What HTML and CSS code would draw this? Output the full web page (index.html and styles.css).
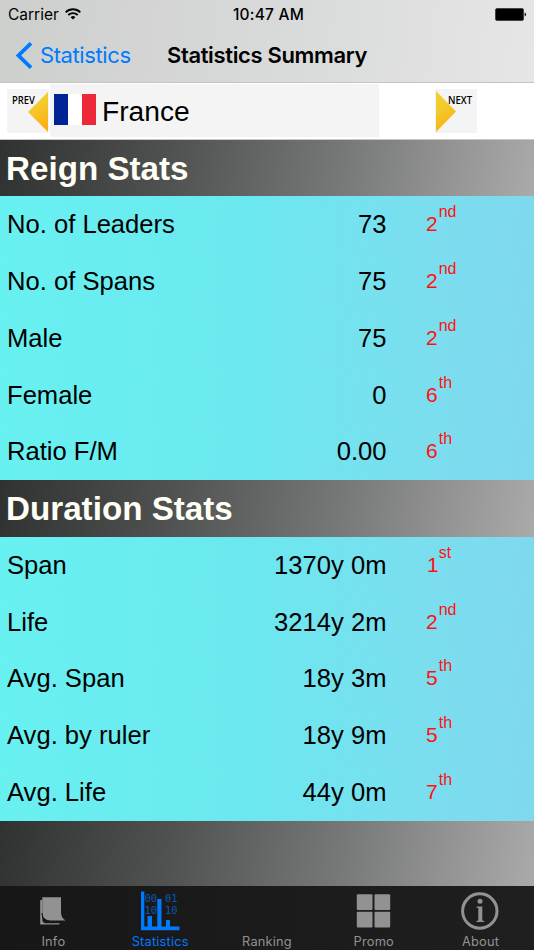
FILE: index.html
```html
<!DOCTYPE html>
<html>
<head>
<meta charset="utf-8">
<meta name="viewport" content="width=device-width, initial-scale=1.0">
<title>Statistics Summary</title>
<link rel="stylesheet" href="styles.css">
</head>
<body>

<div class="topbar">
  <div class="status">
    <div class="carrier">
      <span>Carrier</span>
      <svg width="16" height="12" viewBox="0 0 16 12" fill="none" stroke="#000" stroke-width="1.8">
        <path d="M0.7 4.3a10.3 10.3 0 0 1 14.6 0"/>
        <path d="M3.3 7a6.6 6.6 0 0 1 9.4 0"/>
        <path d="M8 11.6L5.6 9.2a3.4 3.4 0 0 1 4.8 0z" fill="#000" stroke="none"/>
      </svg>
    </div>
    <div class="time">10:47 AM</div>
    <div class="battery">
      <svg width="32" height="13" viewBox="0 0 32 13">
        <rect x="0.5" y="0.5" width="28" height="12" rx="1.5" fill="#000" stroke="#444"/>
        <path d="M29.7 4.5c1.8 0.6 1.8 3.4 0 4z"/>
      </svg>
    </div>
  </div>
  <div class="nav">
    <a class="back" href="#">
      <svg width="17" height="27" viewBox="0 0 17 27" fill="none" stroke="#007aff" stroke-width="3.8"><path d="M16 1.3L3.5 13.5 16 25.7"/></svg>
      <span>Statistics</span>
    </a>
    <div class="title">Statistics Summary</div>
  </div>
</div>

<div class="picker">
  <a class="step prev" href="#">
    <svg width="42" height="44" viewBox="0 0 42 44">
      <defs><linearGradient id="gold" x1="0" y1="0" x2="0.3" y2="1"><stop offset="0" stop-color="#f0cf38"/><stop offset="0.45" stop-color="#f3cb2b"/><stop offset="1" stop-color="#fbb116"/></linearGradient></defs>
      <path d="M41 3v40L21 23z" fill="url(#gold)"/>
      <text x="5" y="15" textLength="23" lengthAdjust="spacingAndGlyphs">PREV</text>
    </svg>
  </a>
  <div class="country">
    <div class="flag"><i></i><i></i><i></i></div>
    <span>France</span>
  </div>
  <a class="step next" href="#">
    <svg width="42" height="44" viewBox="0 0 42 44">
      <path d="M1 2v41l20-20.5z" fill="url(#gold)"/>
      <text x="13" y="15" textLength="24" lengthAdjust="spacingAndGlyphs">NEXT</text>
    </svg>
  </a>
</div>

<div class="stats">
  <h2>Reign Stats</h2>
  <div class="row"><span>No. of Leaders</span><b>73</b><em>2<sup>nd</sup></em></div>
  <div class="row"><span>No. of Spans</span><b>75</b><em>2<sup>nd</sup></em></div>
  <div class="row"><span>Male</span><b>75</b><em>2<sup>nd</sup></em></div>
  <div class="row"><span>Female</span><b>0</b><em>6<sup>th</sup></em></div>
  <div class="row"><span>Ratio F/M</span><b>0.00</b><em>6<sup>th</sup></em></div>
  <h2>Duration Stats</h2>
  <div class="row"><span>Span</span><b>1370y 0m</b><em class="first">1<sup>st</sup></em></div>
  <div class="row"><span>Life</span><b>3214y 2m</b><em>2<sup>nd</sup></em></div>
  <div class="row"><span>Avg. Span</span><b>18y 3m</b><em>5<sup>th</sup></em></div>
  <div class="row"><span>Avg. by ruler</span><b>18y 9m</b><em>5<sup>th</sup></em></div>
  <div class="row"><span>Avg. Life</span><b>44y 0m</b><em>7<sup>th</sup></em></div>
</div>
<div class="filler"></div>

<div class="tabs">
  <a href="#">
    <svg width="40" height="40" viewBox="0 0 40 40" fill="#929292">
      <path d="M9.3 9H7.2v24.5h18.3l2-1.2H12q-2.700-0.500-2.700-3z"/>
      <path d="M9.300 6.200H28V21q0 6 4.500 8.500H17q-7.700-0.500-7.700-8z"/>
      <path d="M8.900 22q0.500 8.600 8 8.600h13" fill="none" stroke="#171717" stroke-width="1.1"/>
    </svg>
    <span>Info</span>
  </a>
  <a class="active" href="#">
    <svg width="40" height="40" viewBox="0 0 40 40" fill="#007aff">
      <g class="digits"><text x="4.5" y="10.5" textLength="12.5" lengthAdjust="spacingAndGlyphs">00</text><text x="25" y="10.5" textLength="12.5" lengthAdjust="spacingAndGlyphs">01</text><text x="4.5" y="22.500" textLength="12.5" lengthAdjust="spacingAndGlyphs">10</text><text x="25" y="22.500" textLength="12.5" lengthAdjust="spacingAndGlyphs">10</text></g>
      <path d="M1 0.500h3.300V35.500H39.500v3.700H1z"/>
      <path d="M7.500 25h4.500v11H7.500zM17.300 8h4.200v28h-4.200zM26 29h4v7h-4z"/>
    </svg>
    <span>Statistics</span>
  </a>
  <a href="#">
    <svg width="40" height="40"></svg>
    <span>Ranking</span>
  </a>
  <a href="#">
    <svg width="40" height="40" viewBox="0 0 40 40" fill="#929292">
      <rect x="2.8" y="3.3" width="15.7" height="15.7" rx="1"/>
      <rect x="20.5" y="3.3" width="15.7" height="15.7" rx="1"/>
      <rect x="2.8" y="20.8" width="15.7" height="15.7" rx="1"/>
      <rect x="20.5" y="20.8" width="15.7" height="15.7" rx="1"/>
    </svg>
    <span>Promo</span>
  </a>
  <a href="#">
    <svg width="40" height="40" viewBox="0 0 40 40" fill="#929292">
      <circle cx="18.8" cy="20" r="17.2" fill="none" stroke="#929292" stroke-width="3"/>
      <circle cx="19" cy="10.3" r="2.5"/>
      <path d="M15.5 15.5h5.800v14l1.800 0.500v1h-7.600v-1l1.800-0.500V17l-1.800-0.500z"/>
    </svg>
    <span>About</span>
  </a>
</div>

</body>
</html>
```

FILE: styles.css
```css
body {
  margin: 0;
  height: 950px;
  display: flex;
  flex-direction: column;
  overflow: hidden;
  font-family: "Liberation Sans", Arial, sans-serif;
  color: #000;
}

a {
  text-decoration: none;
}

svg {
  display: block;
}

/* status bar + navigation */
.topbar {
  box-sizing: border-box;
  height: 83px;
  font-family: Inter, sans-serif;
  background: linear-gradient(97deg, #cdcfcd, #d9dada 55%, #e6e6e6);
  border-bottom: 1px solid #c3c3c3;
}

.status {
  display: grid;
  grid-template-columns: 1fr auto 1fr;
  align-items: center;
  height: 28px;
  padding: 0 7px 0 8px;
  font-size: 15.5px;
}

.carrier {
  display: flex;
  align-items: center;
  gap: 6px;
}

.time {
  font-weight: 500;
  letter-spacing: 0.2px;
  margin-left: 2px;
}

.battery {
  justify-self: end;
}

.nav {
  display: grid;
  grid-template-columns: 1fr auto 1fr;
  align-items: center;
  height: 54px;
  padding: 0 15px 0 15px;
}

.back {
  display: flex;
  align-items: center;
  gap: 8px;
  font-size: 22px;
  letter-spacing: -0.4px;
  color: #007aff;
}

.title {
  font-size: 22px;
  font-weight: 600;
  letter-spacing: -0.35px;
}

/* country picker */
.picker {
  display: flex;
  align-items: center;
  box-sizing: border-box;
  height: 56.5px;
  padding-left: 7px;
  background: #fff;
  border-bottom: 1px solid #c8c8c8;
}

.step {
  background: #f4f4f4;
}

.step text {
  font: 600 11.5px "Open Sans", sans-serif;
}

.country {
  display: flex;
  align-items: center;
  width: 325px;
  height: 53px;
  padding-left: 4px;
  margin: 0 56px 0 1px;
  background: #f4f4f4;
  font-size: 28.2px;
}

.country span {
  padding-top: 2px;
}

.flag {
  display: flex;
  width: 42px;
  height: 31px;
  margin: 0 6px 2px 0;
}

.flag i {
  flex: 1;
  background: #fff;
}

.flag i:first-child {
  background: #002395;
}

.flag i:last-child {
  background: #ed2939;
}

/* tables */
h2, .row {
  box-sizing: border-box;
  height: 56.75px;
  line-height: 57.5px;
  margin: 0;
}

h2 {
  padding-left: 6px;
  line-height: 58.5px;
  font-size: 33.2px;
  color: #fffff5;
}

h2, .filler {
  background: linear-gradient(100deg, #303231, #505251 32%, #777978 64%, #aaa);
}

.row {
  display: grid;
  grid-template-columns: 200px 179.5px 1fr;
  padding-left: 7px;
  font-size: 25.6px;
  background: linear-gradient(100deg, #68f1f1, #6be8ef 46%, #79dfef 75%, #80d8ee);
}

.row b {
  font-weight: normal;
  text-align: right;
}

.row em {
  padding-left: 39.5px;
  font-size: 21px;
  font-style: normal;
  line-height: 56px;
  color: #f11;
}

.row em.first {
  padding-left: 40.5px;
}

.row sup {
  margin-left: 1px;
  font-size: 16px;
  line-height: 0;
  vertical-align: 14px;
}

.first sup {
  margin-left: 0;
}

.filler {
  flex: 1;
}

/* tab bar */
.tabs {
  display: grid;
  grid-template-columns: repeat(5, 1fr);
  box-sizing: border-box;
  height: 64px;
  padding-top: 5px;
  background: linear-gradient(90deg, #171717, #1f1f1f);
}

.tabs a {
  display: flex;
  flex-direction: column;
  align-items: center;
  font: 12.8px/21px Inter, sans-serif;
  letter-spacing: 0.2px;
  color: #929292;
}

.tabs a.active {
  color: #007aff;
}

.digits {
  font: 10px "DejaVu Sans Mono", monospace;
  letter-spacing: 0;
  opacity: 0.65;
}
```
